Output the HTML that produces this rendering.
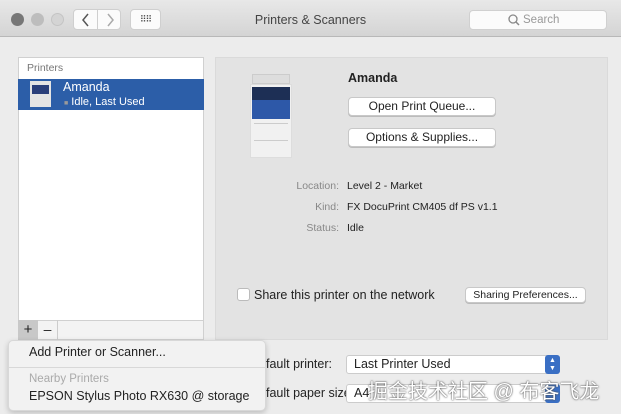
<!DOCTYPE html>
<html><head><style>
*{margin:0;padding:0;box-sizing:border-box}
body{width:621px;height:414px;overflow:hidden;background:#ececec;font-family:"Liberation Sans","Noto Sans CJK SC",sans-serif;position:relative;color:#222}
.a{position:absolute}
.btn{position:absolute;background:#fff;border:1px solid #c8c8c8;border-radius:4px;font-size:12px;text-align:center;box-shadow:0 1px 0 #bbb}
.lbl{position:absolute;font-size:10.5px;color:#888;text-align:right;width:80px}
.val{position:absolute;font-size:10.5px;color:#222}
</style></head><body>
<div class="a" style="left:0;top:0;width:621px;height:37px;background:linear-gradient(#e8e8e8,#d4d4d4);border-bottom:1px solid #b8b8b8"></div>
<div class="a" style="left:11px;top:13px;width:13px;height:13px;border-radius:50%;background:#777"></div>
<div class="a" style="left:31px;top:13px;width:13px;height:13px;border-radius:50%;background:#bdbdbd"></div>
<div class="a" style="left:51px;top:13px;width:13px;height:13px;border-radius:50%;background:#d4d4d4;border:1px solid #c4c4c4"></div>
<div class="a" style="left:73px;top:9px;width:48px;height:21px;background:#fbfbfb;border:1px solid #cfcfcf;border-radius:4px"></div>
<div class="a" style="left:97px;top:9px;width:1px;height:21px;background:#cfcfcf"></div>
<svg class="a" style="left:80px;top:12px" width="12" height="16"><path d="M8 2 L3 8 L8 14" stroke="#555" stroke-width="1.5" fill="none"/></svg>
<svg class="a" style="left:104px;top:12px" width="12" height="16"><path d="M4 2 L9 8 L4 14" stroke="#aaa" stroke-width="1.5" fill="none"/></svg>
<div class="a" style="left:130px;top:9px;width:31px;height:21px;background:#fbfbfb;border:1px solid #cfcfcf;border-radius:4px;font-size:9px;text-align:center;line-height:19px;color:#444;letter-spacing:-1px">⠿⠿</div>
<div class="a" style="left:0;top:13px;width:621px;text-align:center;font-size:12.5px;color:#444">Printers &amp; Scanners</div>
<div class="a" style="left:469px;top:10px;width:138px;height:20px;background:#fbfbfb;border:1px solid #d0d0d0;border-radius:4px;font-size:11.5px;color:#999;line-height:18px;padding-left:53px">Search</div>
<svg class="a" style="left:507px;top:13px" width="14" height="14"><circle cx="6" cy="6" r="4" stroke="#888" stroke-width="1.3" fill="none"/><path d="M9 9 L12 12" stroke="#888" stroke-width="1.5"/></svg>

<div class="a" style="left:18px;top:57px;width:186px;height:264px;background:#fff;border:1px solid #d0d0d0"></div>
<div class="a" style="left:27px;top:62px;font-size:10.5px;color:#777">Printers</div>
<div class="a" style="left:18px;top:79px;width:186px;height:31px;background:#2c5ea8"></div>
<div class="a" style="left:30px;top:81px;width:21px;height:26px;background:#e4e4e4"><div style="margin:4px 2px;height:9px;background:#2a3f7a"></div></div>
<div class="a" style="left:63px;top:80px;font-size:12.5px;color:#fff">Amanda</div>
<div class="a" style="left:64px;top:96px;font-size:11px;color:#fff"><span style="color:#9a9a9a;font-size:7px">■</span> Idle, Last Used</div>
<div class="a" style="left:18px;top:320px;width:186px;height:20px;background:#f3f3f3;border:1px solid #d0d0d0"></div>
<div class="a" style="left:18px;top:320px;width:20px;height:20px;background:#c8c8c8;font-size:15px;text-align:center;line-height:19px">+</div>
<div class="a" style="left:38px;top:320px;width:20px;height:20px;border-right:1px solid #ccc;font-size:14px;text-align:center;line-height:19px">–</div>

<div class="a" style="left:215px;top:57px;width:393px;height:283px;background:#e3e3e3;border:1px solid #dadada"></div>
<div class="a" style="left:252px;top:74px;width:38px;height:10px;background:#ddd;border:1px solid #ccc"></div>
<div class="a" style="left:250px;top:84px;width:42px;height:74px;background:#f1f1f1;border:1px solid #ddd"><div style="margin:2px 1px 0;height:32px;background:linear-gradient(#1d2f55 40%,#2d58a8 40%)"></div><div style="margin:4px 3px;height:1px;background:#ccc"></div><div style="margin:16px 3px 0;height:1px;background:#ccc"></div></div>
<div class="a" style="left:348px;top:71px;font-size:12.5px;font-weight:bold">Amanda</div>
<div class="btn" style="left:348px;top:97px;width:148px;height:19px;line-height:17px">Open Print Queue...</div>
<div class="btn" style="left:348px;top:128px;width:148px;height:19px;line-height:17px">Options &amp; Supplies...</div>
<div class="lbl" style="left:259px;top:180px">Location:</div><div class="val" style="left:347px;top:180px">Level 2 - Market</div>
<div class="lbl" style="left:259px;top:201px">Kind:</div><div class="val" style="left:347px;top:201px">FX DocuPrint CM405 df PS v1.1</div>
<div class="lbl" style="left:259px;top:222px">Status:</div><div class="val" style="left:347px;top:222px">Idle</div>
<div class="a" style="left:237px;top:288px;width:13px;height:13px;background:#fff;border:1px solid #bbb;border-radius:3px"></div>
<div class="a" style="left:254px;top:288px;font-size:12.5px">Share this printer on the network</div>
<div class="btn" style="left:465px;top:287px;width:121px;height:16px;line-height:14px;font-size:10.5px">Sharing Preferences...</div>

<div class="a" style="left:250px;top:357px;font-size:12.5px">Default printer:</div>
<div class="a" style="left:346px;top:355px;width:214px;height:19px;background:#fff;border:1px solid #ccc;border-radius:3px;font-size:12.5px;line-height:17px;padding-left:7px">Last Printer Used</div>
<div class="a" style="left:545px;top:355px;width:15px;height:19px;background:#3a6fc4;border-radius:3px;color:#fff;font-size:7px;line-height:8px;text-align:center;padding-top:2px">▲<br>▼</div>
<div class="a" style="left:250px;top:386px;font-size:12.5px">Default paper size:</div>
<div class="a" style="left:346px;top:384px;width:214px;height:19px;background:#fff;border:1px solid #ccc;border-radius:3px;font-size:12.5px;line-height:17px;padding-left:7px">A4</div>
<div class="a" style="left:545px;top:384px;width:15px;height:19px;background:#3a6fc4;border-radius:3px"></div>
<div class="a" style="left:368px;top:375px;font-size:20px;color:#fff;text-shadow:0 0 2px #555,0 0 1px #555">掘金技术社区 @ 布客飞龙</div>

<div class="a" style="left:8px;top:340px;width:258px;height:71px;background:#f2f2f2;border:1px solid #d8d8d8;border-radius:5px;box-shadow:0 2px 6px rgba(0,0,0,.2)"></div>
<div class="a" style="left:29px;top:345px;font-size:12.5px">Add Printer or Scanner...</div>
<div class="a" style="left:9px;top:367px;width:256px;height:1px;background:#d8d8d8"></div>
<div class="a" style="left:29px;top:373px;font-size:11.5px;color:#aaa">Nearby Printers</div>
<div class="a" style="left:29px;top:389px;font-size:12.5px">EPSON Stylus Photo RX630 @ storage</div>
</body></html>
